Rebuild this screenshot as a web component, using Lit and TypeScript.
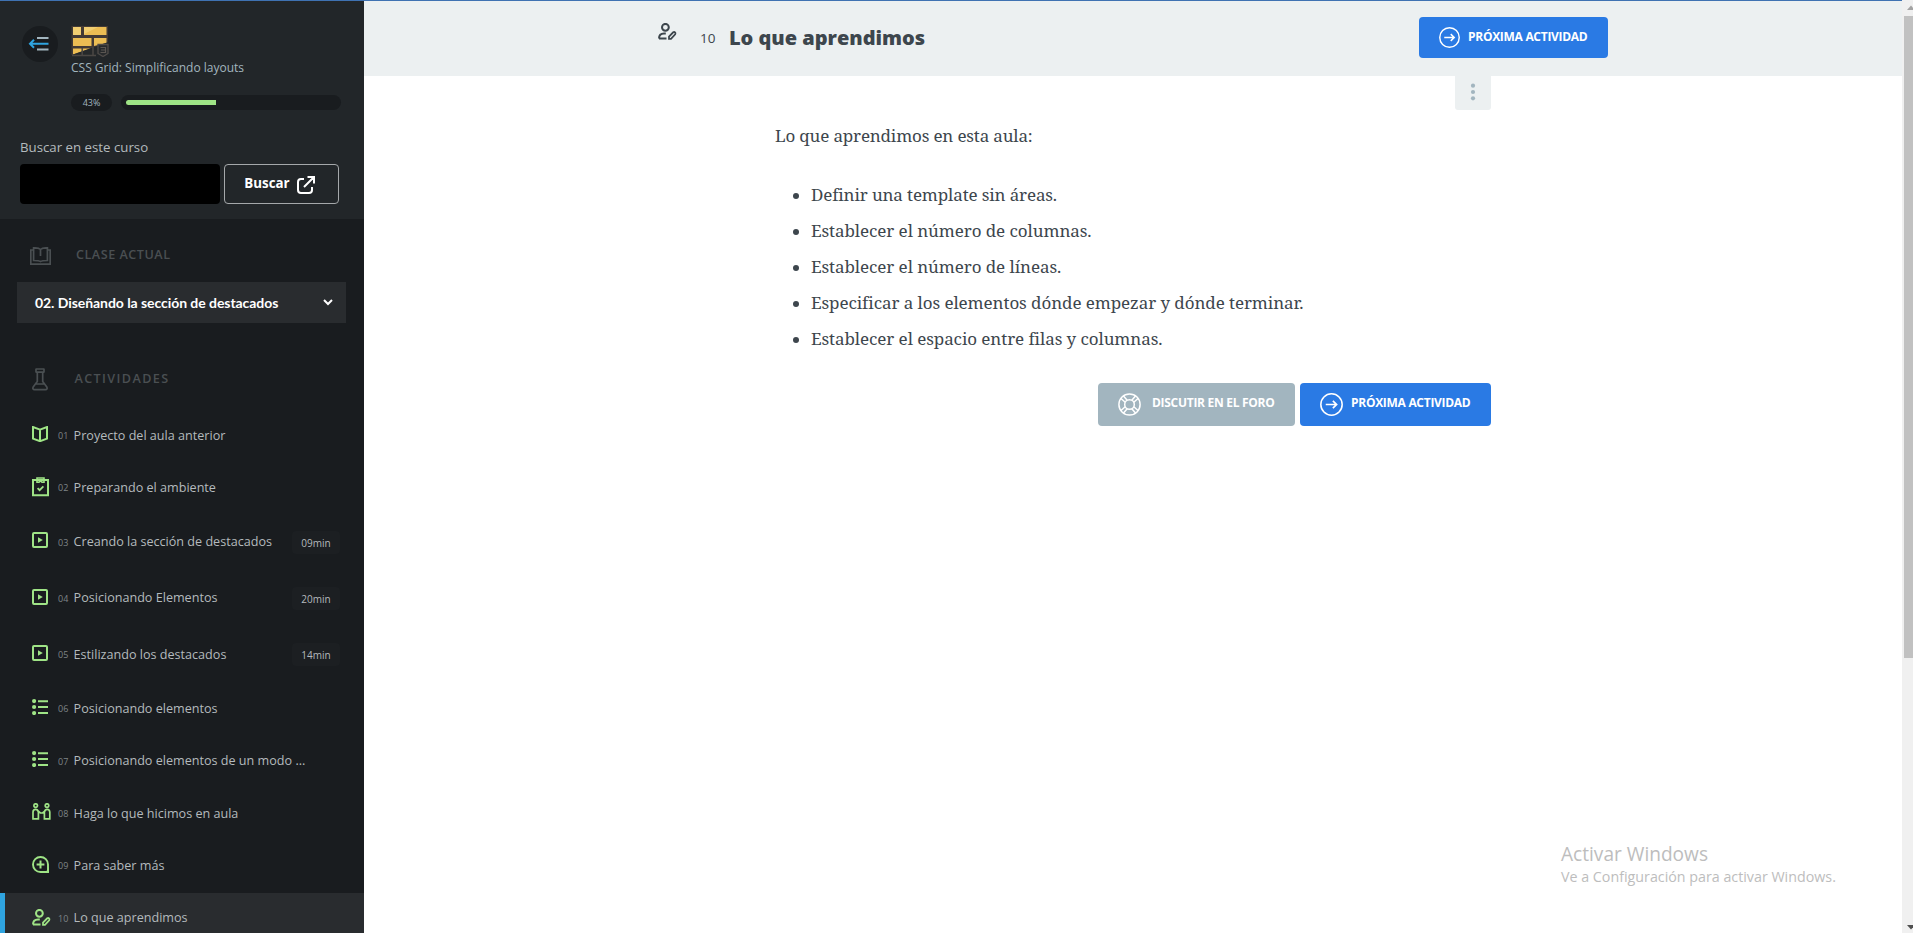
import { LitElement, html, css, svg } from 'lit';
import { customElement, property } from 'lit/decorators.js';
import { classMap } from 'lit/directives/class-map.js';

type Kind = 'book' | 'clipboard' | 'video' | 'list' | 'pair' | 'plus' | 'person';

interface Activity {
  n: string;
  title: string;
  kind: Kind;
  time?: string;
}

const ACTIVITIES: Activity[] = [
  { n: '01', title: 'Proyecto del aula anterior', kind: 'book' },
  { n: '02', title: 'Preparando el ambiente', kind: 'clipboard' },
  { n: '03', title: 'Creando la sección de destacados', kind: 'video', time: '09min' },
  { n: '04', title: 'Posicionando Elementos', kind: 'video', time: '20min' },
  { n: '05', title: 'Estilizando los destacados', kind: 'video', time: '14min' },
  { n: '06', title: 'Posicionando elementos', kind: 'list' },
  { n: '07', title: 'Posicionando elementos de un modo ...', kind: 'list' },
  { n: '08', title: 'Haga lo que hicimos en aula', kind: 'pair' },
  { n: '09', title: 'Para saber más', kind: 'plus' },
  { n: '10', title: 'Lo que aprendimos', kind: 'person' },
];

const SHAPES = {
  book: svg`<path d="M8 3.6L1 1v11.6l7 2.6 7-2.6V1L8 3.6V15"/>`,
  clipboard: svg`<path d="M1 3h15v15.2H1z"/><path d="M5 1h7v4.2H10L8.5 3.8 7 5.2H5z" stroke-width="1.6"/><path d="M5.6 11.2l2 2 3.800-3.800" stroke-width="1.800"/>`,
  video: svg`<rect x="1" y="1" width="14" height="14" rx="1"/><path d="M6 5.2v5.6l4.8-2.8z" fill="currentColor" stroke="none"/>`,
  list: svg`<g fill="currentColor" stroke="none"><circle cx="2.1" cy="2.1" r="2.1"/><circle cx="2.1" cy="8" r="2.1"/><circle cx="2.1" cy="14" r="2.1"/><path d="M6 1.2h10v2H6zM6 7h10v2H6zM6 13h10v2H6z"/></g>`,
  pair: svg`<g stroke-width="1.7"><circle cx="3.7" cy="2.6" r="1.8"/><circle cx="15" cy="2.6" r="1.8"/><path d="M1 15.800V9.200C1 7.200 2 6.400 3.600 6.400S6 7.400 6.400 9v6.800zM17.800 15.800V9.200c0-2-1-2.800-2.600-2.800s-2.400 1-2.800 2.600v6.800zM6 8l2.400 2h2.200L13 8"/></g>`,
  plus: svg`<path d="M8.500 16A7.500 7.500 0 1 1 16 8.500V16z" stroke-width="1.900"/><path d="M10.500 17H17V10.500C16 14 14 16 10.500 17z" fill="currentColor" stroke="none"/><path d="M8.500 4.600v7.800M4.600 8.500h7.800"/>`,
  person: svg`<circle cx="7.400" cy="4.300" r="3.400"/><path d="M1 15.600c0-3.400 2-5 5-5h1.800M1 15.600h7.500"/><path d="M11 15.900v-2.400l4.200-4.200c1.400-.8 2.800.6 2 2L13 15.900z" stroke-width="1.800"/>`,
};

const BOX: Record<Kind, [number, number]> = {
  book: [16, 16], clipboard: [17, 20], video: [16, 16], list: [16, 16], pair: [19, 17], plus: [17, 17], person: [19, 17],
};

const glyph = (kind: Kind) => {
  const [w, h] = BOX[kind];
  return html`<svg width=${w} height=${h} viewBox="0 0 ${w} ${h}" fill="none" stroke="currentColor" stroke-width="2">${SHAPES[kind]}</svg>`;
};

const arrowCircle = (size: number) => html`
  <svg width=${size} height=${size} viewBox="0 0 22 22" fill="none" stroke="currentColor" stroke-width="1.500">
    <circle cx="11" cy="11" r="10.200" /><path d="M5.500 11h10.300M12.300 7.500l3.600 3.500-3.600 3.500" stroke-width="1.600" />
  </svg>`;

@customElement('activity-item')
class ActivityItem extends LitElement {
  @property({ attribute: false }) item!: Activity;
  @property({ type: Boolean }) current = false;

  static styles = css`
    :host { display: block; }
    .row { box-sizing: border-box; height: 52.300px; display: flex; padding-left: 32px; color: #b4babd; }
    .row.timed { height: 56.300px; }
    .row.current { background: #292c2f; border-left: 5px solid #2fa4e0; padding-left: 27px; }
    .icon { color: #9fe486; width: 26px; padding-top: 16px; flex: none; }
    .icon svg { display: block; }
    .icon.pair, .icon.plus { padding-top: 15.200px; }
    .icon.clipboard { padding-top: 15.200px; }
    .icon.video { padding-top: 17.700px; }
    .icon.list { padding-top: 15.500px; }
    .num { font-size: 9px; line-height: 20px; width: 15.600px; padding-top: 16px; color: #7f8588; flex: none; }
    .title { font-size: 12.600px; line-height: 20px; padding-top: 15.600px; white-space: nowrap; flex: 1; }
    .timed .title { padding-top: 17.600px; }
    .timed .num { padding-top: 18px; }
    .time { box-sizing: border-box; width: 48px; height: 23px; margin: 16px 24px 0 0; text-align: center; font-size: 10px; line-height: 24px; border-radius: 4px; background: #1c1f22; flex: none; }
  `;

  render() {
    const { n, title, kind, time } = this.item;
    return html`
      <div class=${classMap({ row: true, timed: !!time, current: this.current })}>
        <span class="icon ${kind}">${glyph(kind)}</span>
        <span class="num">${n}</span>
        <span class="title">${title}</span>
        ${time ? html`<span class="time">${time}</span>` : ''}
      </div>`;
  }
}

@customElement('course-sidebar')
class CourseSidebar extends LitElement {
  @property({ type: Number }) progress = 43;

  static styles = css`
    :host { display: block; width: 364px; height: 932px; overflow: hidden; background: #191c1f; color: #b4babd; }
    .top { box-sizing: border-box; height: 218px; background: #222629; padding: 24px 20px 0; }
    .course { display: flex; }
    .toggle { width: 36px; height: 36px; border-radius: 50%; background: #191c1f; margin: 1px 13px 0 2px; display: grid; place-items: center; }
    .toggle svg { margin-right: 3px; }
    .logo { display: block; }
    .name { font-size: 12px; line-height: 18px; margin-top: 2px; color: #a2b5bf; white-space: nowrap; }
    .progress { display: flex; align-items: center; margin: 17px 0 0 51px; }
    .pct { width: 41px; height: 17px; border-radius: 9px; background: #191c1f; font-size: 9px; line-height: 17px; text-align: center; color: #a2b5bf; }
    .track { box-sizing: border-box; width: 220px; height: 15px; margin-left: 9px; padding: 5px; border-radius: 8px; background: #191c1f; }
    .bar { height: 5px; background: #9fe486; border-radius: 3px 0 0 3px; }
    .label { font-size: 13.250px; line-height: 18px; margin-top: 27px; }
    .search { display: flex; margin-top: 8px; gap: 4px; }
    .field { box-sizing: border-box; width: 200px; height: 40px; border: 0; border-radius: 4px; background: #000; }
    .go { box-sizing: border-box; width: 115px; height: 40px; border: 1px solid #a5a8aa; border-radius: 4px; display: flex; align-items: center; justify-content: center; gap: 7px; color: #fff; background: none; font: 700 13.333px 'Open Sans', sans-serif; padding: 0 4px 2px 0; }
    .go svg { margin-top: 4px; }
    .heading { display: flex; color: #4a4f52; font-size: 12.600px; font-weight: 600; line-height: 18px; }
    .heading svg { display: block; }
    .clase { padding: 26px 0 0 30px; gap: 25px; letter-spacing: 0.520px; height: 20px; }
    .clase svg { margin-top: 2px; }
    .clase span { padding-top: 1px; }
    .acts { padding: 45px 0 0 32px; gap: 26.500px; letter-spacing: 1.400px; height: 42px; }
    .acts span { padding-top: 2px; }
    .select { box-sizing: border-box; width: 329px; height: 41px; margin: 17px 0 0 17px; padding: 0 13px 0 18px; background: #292c2f; color: #fff; display: flex; align-items: center; justify-content: space-between; font: 700 14px Lato, sans-serif; letter-spacing: -0.060px; }
  `;

  render() {
    return html`
      <div class="top">
        <div class="course">
          <div class="toggle">
            <svg width="21" height="16" viewBox="0 0 21 16" fill="none">
              <path d="M9 2h11.500M9 13.500h11.500" stroke="#a2b5bf" stroke-width="1.800" />
              <path d="M20.500 7.800H2M6 3.800L2 7.800l4 4" stroke="#2fa4e0" stroke-width="2" />
            </svg>
          </div>
          <div>
            <svg class="logo" width="38" height="32" viewBox="0 0 38 32">
              <path d="M0.500 1H37V17L33 20 29 30H0.500z" fill="#433a35" />
              <g fill="#ecbd53">
                <path d="M2 2h8v8H2z" /><path d="M13 2h22.500v8H13z" />
                <path d="M2 13h18.500v8H2z" /><path d="M23 13h12.500v5L23 21z" />
                <path d="M2 23.500h17.500L2 29.500z" />
              </g>
              <path d="M2 2h8v8H2zM13 9l14-7H13z" fill="#f3d57f" opacity="0.700" />
              <path d="M2 29.500L36 17.500V30H2z" fill="#25282a" />
              <path d="M1 30.500h24M11.200 23v7M22 22v8" stroke="#4b4744" stroke-width="1.500" />
              <path d="M27 19.500h10v9l-5 3-5-3z" fill="#272a2c" stroke="#504c49" stroke-width="1.300" />
              <path d="M29.500 22.500h5v5h-5M30 25h4" fill="none" stroke="#5b5652" stroke-width="1.200" />
            </svg>
            <div class="name">CSS Grid: Simplificando layouts</div>
          </div>
        </div>
        <div class="progress">
          <div class="pct">${this.progress}%</div>
          <div class="track"><div class="bar" style="width:${this.progress}%"></div></div>
        </div>
        <div class="label">Buscar en este curso</div>
        <div class="search">
          <input class="field" aria-label="Buscar en este curso" />
          <button class="go">Buscar
            <svg width="18" height="18" viewBox="0 0 18 18" fill="none" stroke="currentColor" stroke-width="2">
              <path d="M7 3H4C2 3 1 4 1 6v8c0 2 1 3 3 3h8c2 0 3-1 3-3v-3M7 11L16.500 1.500M10.500 1H17v6.500" />
            </svg>
          </button>
        </div>
      </div>
      <div class="heading clase">
        <svg width="21" height="18" viewBox="0 0 21 18" fill="none" stroke="currentColor" stroke-width="1.700">
          <path d="M3 3H.8v14.200h19.400V3H18" />
          <path d="M10.500 2.500C9 1 6 .8 3.600.8v12.700c3 0 5.500 0 6.900 1 1.400-1 3.900-1 6.900-1V.8c-2.400 0-5.400.2-6.900 1.700V9" />
        </svg>
        <span>CLASE ACTUAL</span>
      </div>
      <div class="select">
        <span>02. Diseñando la sección de destacados</span>
        <svg width="10" height="7" viewBox="0 0 10 7" fill="none" stroke="currentColor" stroke-width="2"><path d="M1 1l4 4 4-4" /></svg>
      </div>
      <div class="heading acts">
        <svg width="16" height="23" viewBox="0 0 16 23" fill="none" stroke="currentColor" stroke-width="1.700">
          <path d="M3.500 1h9M3.500 4.200h9M5.300 4.200v9.300L1.200 19c-.7 1.500-.2 2.700 1.300 2.700h11c1.500 0 2-1.200 1.300-2.700l-4.100-5.500V4.200M4 1v3M12 1v3M3.500 16h9" />
        </svg>
        <span>ACTIVIDADES</span>
      </div>
      ${ACTIVITIES.map((a) => html`<activity-item .item=${a} ?current=${a.n === '10'}></activity-item>`)}
    `;
  }
}

@customElement('app-root')
class AppRoot extends LitElement {
  static styles = css`
    :host { display: flex; height: 933px; overflow: hidden; background: #fff; font-family: 'Open Sans', 'Noto Sans', sans-serif; position: relative; }
    .page { width: 1902px; flex: none; border-top: 1px solid #3f72b2; box-sizing: border-box; display: flex; }
    main { flex: 1; color: #3d464d; }
    header { box-sizing: border-box; height: 75px; background: #ecf0f1; display: flex; padding-left: 294px; }
    .hicon { width: 42px; padding-top: 22px; }
    .hicon svg { display: block; }
    .hnum { width: 29px; font-size: 13.500px; line-height: 20px; padding-top: 27px; }
    h1 { margin: 0; font-size: 20px; font-weight: 800; letter-spacing: -0.020px; line-height: 28px; padding-top: 23px; width: 690px; white-space: nowrap; }
    .btn { box-sizing: border-box; height: 43px; border-radius: 4px; background: #2a7ae4; color: #fff; display: flex; align-items: center; font-size: 12px; font-weight: 700; letter-spacing: -0.290px; padding: 0 0 0 20px; white-space: nowrap; }
    .btn span { padding-bottom: 3px; }
    .btn.head { width: 189px; height: 41px; margin-top: 16px; gap: 8px; }
    .content { width: 717px; margin-left: 410px; }
    .kebab { width: 36px; height: 34px; margin-left: auto; background: #ecf0f1; border-radius: 0 0 3px 3px; }
    .kebab svg { display: block; }
    .text { font: 17px/36px 'Noto Serif', 'Liberation Serif', serif; color: #3d464d; }
    p { margin: 8px 0 0 1px; letter-spacing: -0.170px; }
    ul { margin: 23px 0 0; padding: 0 0 0 19px; list-style: none; }
    li { display: flex; align-items: center; letter-spacing: -0.080px; white-space: nowrap; }
    li:first-child { letter-spacing: -0.140px; }
    .dot { width: 6px; height: 6px; border-radius: 50%; background: #3d464d; margin: 2px 12px 0 0; flex: none; }
    .actions { display: flex; justify-content: flex-end; gap: 5px; margin: 26px 0 0; }
    .actions .btn span { padding-bottom: 4px; }
    .forum { width: 197px; background: #a2b5bf; gap: 11px; }
    .next { width: 191px; gap: 8px; }
    .bar { width: 11px; background: #f0f0f0; display: flex; flex-direction: column; justify-content: space-between; padding-left: 2px; box-sizing: border-box; flex: none; }
    .bar svg { display: block; flex: none; }
    .thumb { height: 642px; background: #c1c1c1; margin-bottom: auto; }
    .notice { position: absolute; left: 1561px; top: 841px; color: #bdbdbd; white-space: nowrap; }
    .notice .big { font-size: 19.100px; line-height: 26px; }
    .notice .small { font-size: 14.280px; line-height: 20px; }
  `;

  render() {
    const learned = [
      'Definir una template sin áreas.',
      'Establecer el número de columnas.',
      'Establecer el número de líneas.',
      'Especificar a los elementos dónde empezar y dónde terminar.',
      'Establecer el espacio entre filas y columnas.',
    ];
    return html`
      <div class="page">
        <course-sidebar></course-sidebar>
        <main>
          <header>
            <div class="hicon">${glyph('person')}</div>
            <div class="hnum">10</div>
            <h1>Lo que aprendimos</h1>
            <div class="btn head">${arrowCircle(21)}<span>PRÓXIMA ACTIVIDAD</span></div>
          </header>
          <div class="content">
            <div class="kebab">
              <svg width="36" height="34" viewBox="0 0 36 34" fill="#a2b5bf">
                <circle cx="18" cy="9.700" r="2.100" /><circle cx="18" cy="16" r="2.100" /><circle cx="18" cy="22.300" r="2.100" />
              </svg>
            </div>
            <div class="text">
              <p>Lo que aprendimos en esta aula:</p>
              <ul>${learned.map((t) => html`<li><span class="dot"></span>${t}</li>`)}</ul>
            </div>
            <div class="actions">
              <div class="btn forum">
                <svg width="23" height="23" viewBox="0 0 23 23" fill="none" stroke="currentColor" stroke-width="1.500">
                  <circle cx="11.500" cy="11.500" r="10.600" /><circle cx="11.500" cy="11.500" r="4.800" />
                  <path d="M7.200 9.200L3 5.500M9.200 7.200L5.500 3M13.800 7.200L17.500 3M15.800 9.200L20 5.500M15.800 13.800l4.200 3.700M13.800 15.800l3.700 4.200M9.200 15.800L5.500 20M7.200 13.800L3 17.500" />
                </svg><span>DISCUTIR EN EL FORO</span>
              </div>
              <div class="btn next">${arrowCircle(23)}<span>PRÓXIMA ACTIVIDAD</span></div>
            </div>
          </div>
        </main>
      </div>
      <div class="bar">
        <svg width="9" height="16" viewBox="0 0 9 16"><path d="M3 10l4-4.500 4 4.500z" fill="#a3a3a3" /></svg>
        <div class="thumb"></div>
        <svg width="9" height="10" viewBox="0 0 9 10"><path d="M3 2h8L7 6.500z" fill="#505050" /></svg>
      </div>
      <div class="notice">
        <div class="big">Activar Windows</div>
        <div class="small">Ve a Configuración para activar Windows.</div>
      </div>
    `;
  }
}
